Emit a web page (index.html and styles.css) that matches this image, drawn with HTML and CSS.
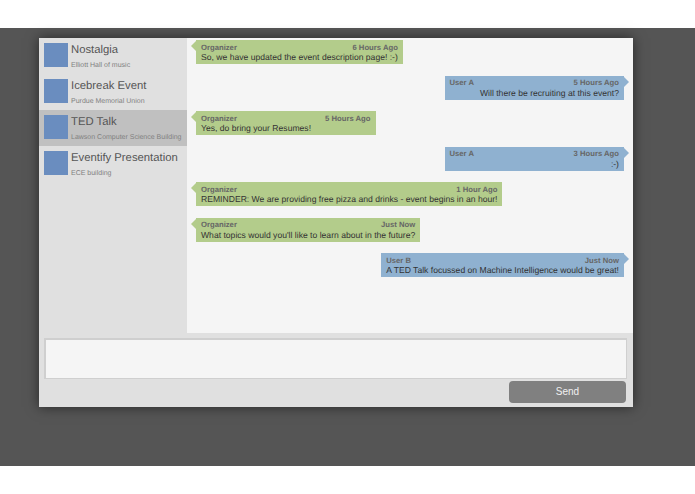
FILE: index.html
```html
<!DOCTYPE html>
<html lang="en">
<head>
  <meta charset="UTF-8" />
  <title>Eventify Chat</title>
  <link rel="stylesheet" href="styles.css">
</head>
<body>
  <div class="stage">
    <div class="window">
      <div class="top">
        <div class="sidebar">
          <div class="event">
            <div class="thumb"></div>
            <div>
              <div class="event-name">Nostalgia</div>
              <div class="event-place">Elliott Hall of music</div>
            </div>
          </div>
          <div class="event">
            <div class="thumb"></div>
            <div>
              <div class="event-name">Icebreak Event</div>
              <div class="event-place">Purdue Memorial Union</div>
            </div>
          </div>
          <div class="event selected">
            <div class="thumb"></div>
            <div>
              <div class="event-name">TED Talk</div>
              <div class="event-place">Lawson Computer Science Building</div>
            </div>
          </div>
          <div class="event">
            <div class="thumb"></div>
            <div>
              <div class="event-name">Eventify Presentation</div>
              <div class="event-place">ECE building</div>
            </div>
          </div>
        </div>

        <div class="messages">
          <div class="msg organizer">
            <div class="msg-head"><span>Organizer</span><span>6 Hours Ago</span></div>
            <div class="msg-text">So, we have updated the event description page! :-)</div>
          </div>
          <div class="msg user">
            <div class="msg-head"><span>User A</span><span>5 Hours Ago</span></div>
            <div class="msg-text">Will there be recruiting at this event?</div>
          </div>
          <div class="msg organizer">
            <div class="msg-head"><span>Organizer</span><span>5 Hours Ago</span></div>
            <div class="msg-text">Yes, do bring your Resumes!</div>
          </div>
          <div class="msg user">
            <div class="msg-head"><span>User A</span><span>3 Hours Ago</span></div>
            <div class="msg-text">:-)</div>
          </div>
          <div class="msg organizer">
            <div class="msg-head"><span>Organizer</span><span>1 Hour Ago</span></div>
            <div class="msg-text">REMINDER: We are providing free pizza and drinks - event begins in an hour!</div>
          </div>
          <div class="msg organizer">
            <div class="msg-head"><span>Organizer</span><span>Just Now</span></div>
            <div class="msg-text">What topics would you'll like to learn about in the future?</div>
          </div>
          <div class="msg user">
            <div class="msg-head"><span>User B</span><span>Just Now</span></div>
            <div class="msg-text">A TED Talk focussed on Machine Intelligence would be great!</div>
          </div>
        </div>
      </div>

      <div class="composer">
        <div class="input-box"></div>
        <button class="send">Send</button>
      </div>
    </div>
  </div>
</body>
</html>
```

FILE: styles.css
```css
body {
  margin: 0;
  background: #fff;
  font-family: "Liberation Sans", Arial, sans-serif;
  text-rendering: geometricPrecision;
}

.stage {
  margin-top: 28px;
  height: 438px;
  padding: 9.5px 62px 0 38.5px;
  box-sizing: border-box;
  background: #555;
}

.window {
  height: 369px;
  background: #e0e0e0;
  box-shadow: 0 0 12px rgba(0, 0, 0, 0.55);
}

.top {
  display: flex;
  height: 295.5px;
}

/* event list */
.sidebar {
  width: 148.5px;
  flex-shrink: 0;
}

.event {
  display: flex;
  gap: 3px;
  height: 36px;
  padding: 5.5px 0 0 5.5px;
  box-sizing: border-box;
}

.event.selected {
  background: #c0c0c0;
}

.thumb {
  width: 24px;
  height: 24px;
  flex-shrink: 0;
  background: #6a8dbf;
}

.event-name {
  margin-top: -0.5px;
  font-size: 11.3px;
  line-height: 15px;
  white-space: nowrap;
  color: #555;
}

.event-place {
  margin-top: 3.5px;
  font-size: 7px;
  line-height: 9px;
  white-space: nowrap;
  color: #808080;
}

/* chat */
.messages {
  flex: 1;
  display: flex;
  flex-direction: column;
  align-items: flex-start;
  gap: 11.5px;
  padding: 2.5px 9px 0;
  background: #f5f5f5;
}

.msg {
  position: relative;
  box-sizing: border-box;
  min-width: 179.5px;
  height: 24px;
  padding: 3.5px 5px 0;
  color: #333;
}

.msg::after {
  content: "";
  position: absolute;
  top: 1px;
  border-top: 5px solid transparent;
  border-bottom: 5px solid transparent;
}

.organizer {
  background: #b3cc8b;
}

.organizer::after {
  left: -5px;
  border-right: 5px solid #b3cc8b;
}

.user {
  align-self: flex-end;
  background: #8fb1d0;
  text-align: right;
}

.user::after {
  right: -5px;
  border-left: 5px solid #8fb1d0;
}

.msg-head {
  display: flex;
  justify-content: space-between;
  font-size: 7.7px;
  line-height: 8px;
  font-weight: bold;
  color: #666;
}

.msg-text {
  margin-top: 0.5px;
  font-size: 8.6px;
  line-height: 11px;
  white-space: nowrap;
}

/* bottom bar */
.composer {
  padding: 4.5px 6px 0 5.5px;
}

.input-box {
  height: 41px;
  box-sizing: border-box;
  background: #f5f5f5;
  border: 1px solid #cfcfcf;
  border-top-width: 2px;
  border-left-width: 2px;
}

.send {
  display: block;
  width: 117px;
  height: 22px;
  margin: 2px 1px 0 auto;
  border: none;
  border-radius: 4px;
  background: #808080;
  color: #f0f0f0;
  font-family: inherit;
  font-size: 10px;
}
```
